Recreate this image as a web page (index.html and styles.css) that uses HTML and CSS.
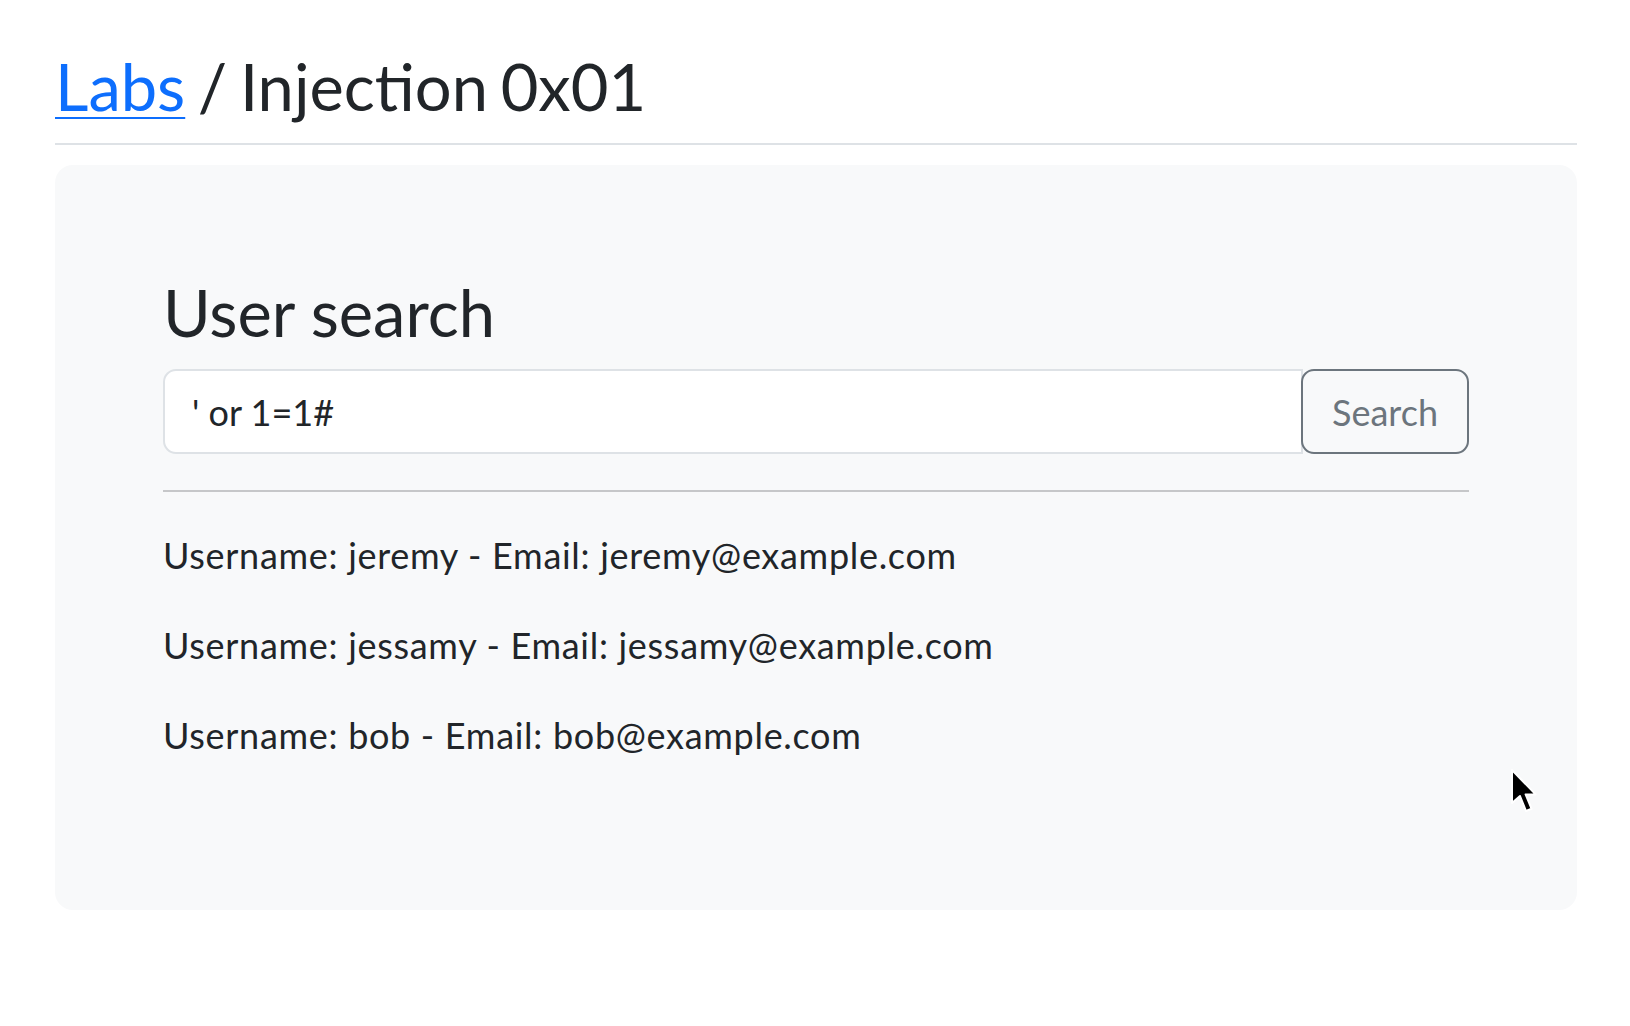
FILE: index.html
```html
<!DOCTYPE html>
<html lang="en">
<head>
<meta charset="utf-8">
<title>Labs / Injection 0x01</title>
<link rel="stylesheet" href="styles.css">
</head>
<body>
<div class="container">
  <h1 class="page-title"><a href="#" class="crumb-link">Labs</a> / Injection 0x01</h1>
  <div class="divider"></div>
  <div class="card">
    <h2 class="card-title">User search</h2>
    <form class="input-group">
      <input class="search-input" type="text" value="' or 1=1#">
      <button class="search-btn" type="button">Search</button>
    </form>
    <hr class="rule">
    <p class="result">Username: jeremy - Email: jeremy@example.com</p>
    <p class="result">Username: jessamy - Email: jessamy@example.com</p>
    <p class="result">Username: bob - Email: bob@example.com</p>
  </div>
</div>
<svg class="cursor" width="28" height="48" viewBox="0 0 14 24" xmlns="http://www.w3.org/2000/svg">
  <path d="M1 1 L1 17.5 L5 14 L8 21.5 L10.8 20.4 L7.8 13.2 L12.8 13.2 Z" fill="#000" stroke="#fff" stroke-width="1" stroke-linejoin="round"/>
</svg>
</body>
</html>
```
FILE: styles.css
```css
html, body {
  margin: 0;
  padding: 0;
  background: #ffffff;
}
body {
  font-family: "Lato", "Noto Sans", sans-serif;
  color: #212529;
  font-size: 36px;
  line-height: 1.5;
}
.container {
  width: 1522px;
  margin-left: 55px;
  padding-top: 47px;
}
.page-title {
  margin: 0 0 18px 0;
  font-size: 65px;
  font-weight: 400;
  line-height: 1.2;
  word-spacing: -4px;
}
.crumb-link {
  color: #0d6efd;
  text-decoration: underline;
  text-decoration-thickness: 2px;
  text-underline-offset: 6px;
}
.divider {
  height: 2px;
  background: #dee2e6;
  margin-bottom: 20px;
}
.card {
  background: #f8f9fa;
  border-radius: 18px;
  padding: 108px;
  min-height: 529px;
}
.card-title {
  margin: 0 0 18px 0;
  font-size: 65px;
  font-weight: 400;
  line-height: 1.2;
}
.input-group {
  display: flex;
  margin: 0;
}
.search-input {
  flex: 1;
  height: 85px;
  box-sizing: border-box;
  border: 2px solid #dee2e6;
  border-radius: 13px 0 0 13px;
  padding: 0 27px;
  font-family: inherit;
  font-size: 36px;
  color: #212529;
  background: #ffffff;
  outline: none;
}
.search-btn {
  height: 85px;
  width: 168px;
  box-sizing: border-box;
  margin-left: -2px;
  border: 2px solid #6c757d;
  border-radius: 13px;
  background: transparent;
  color: #6c757d;
  font-family: inherit;
  font-size: 36px;
  padding: 0 27px;
}
.rule {
  border: 0;
  border-top: 2px solid #c6c7c9;
  margin: 36px 0;
}
.result {
  margin: 0 0 36px 0;
  line-height: 54px;
  letter-spacing: 0.7px;
}
.cursor {
  position: absolute;
  left: 1510px;
  top: 768px;
}
```
